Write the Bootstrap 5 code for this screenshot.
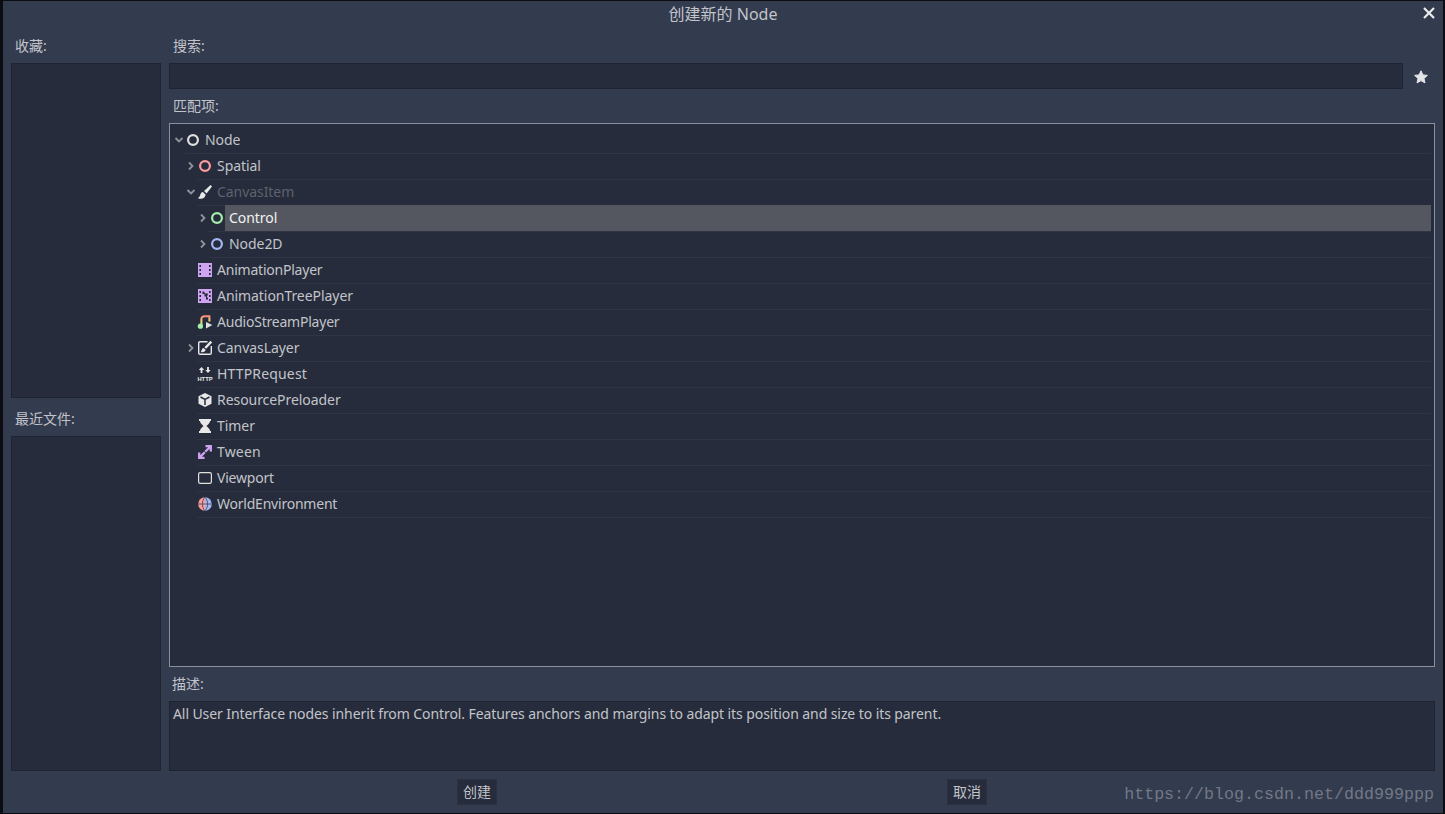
<!DOCTYPE html>
<html lang="zh">
<head>
<meta charset="utf-8">
<title>创建新的 Node</title>
<link href="https://cdn.jsdelivr.net/npm/bootstrap@5.3.0/dist/css/bootstrap.min.css" rel="stylesheet">
<style>
html,body{height:814px;overflow:hidden}
body{background:#0c0d11;font-family:"Noto Sans","Noto Sans CJK SC",sans-serif;font-size:14px;line-height:20px;color:#c2c4ca;padding:1px 2px 1px 3px}
.gd-window{height:812px;background:#333b4f;position:relative}
.gd-title{height:35px;padding-top:2px;font-size:16px;line-height:22px}
.gd-close{position:absolute;top:5px;right:7px;width:14px;height:14px;display:block}
.gd-main{flex:1 1 0;min-height:0;padding:0 8px;gap:8px}
.gd-left{width:150px}
.gd-label{padding:0 4px;height:27px;flex:none}
.gd-label-mid{height:38px;padding-top:11px}
.gd-label-sm{height:34px;padding-top:7px}
.gd-label-desc{height:34px;padding:7px 3px 0}
.gd-panel{background:#262c3b;border:1px solid #1f2430}
.gd-panel-grow{flex:1 1 0;min-height:0}
.gd-search{height:26px}
.gd-star{width:32px;flex:none;padding:2px 0 0 4px}
.gd-fill{min-width:0}
.gd-tree{flex:1 1 0;min-height:0;background:#262c3b;border:1px solid #8a8f9b;padding:4px 3px 0}
.gd-node{height:26px}
.gd-lv1{padding-left:12px}
.gd-lv2{padding-left:24px}
.gd-arrow{width:12px;flex:none;padding-bottom:2px}
.gd-cell{border-bottom:1px solid #2f3545;min-width:0;padding-bottom:1px}
.gd-ico{width:16px;height:16px;flex:none}
.gd-name{padding-left:4px;height:24px;line-height:24px;letter-spacing:-.06px}
.gd-tight{letter-spacing:-.22px}
.gd-wide{letter-spacing:.16px}
.gd-muted{color:#5d626e}
.gd-sel{background:#54575f;color:#f2f2f2;margin-top:-1px;height:26px;line-height:26px}
.gd-desc{height:70px;flex:none;padding:2px 3px;letter-spacing:-.085px}
.gd-foot{height:42px;flex:none;padding:8px 0 0 454px;gap:450px}
.gd-btn{width:40px;height:26px;padding:0;background:#262c3b;border:1px solid #2a3040;border-radius:0;color:#c2c4ca;font-size:14px;line-height:24px}
.gd-btn:hover{background:#262c3b;color:#c2c4ca;border-color:#2a3040}
.gd-mark{position:absolute;right:9px;bottom:8px;font-family:"Liberation Mono",monospace;font-size:16.67px;line-height:20px;color:#727885}
</style>
</head>
<body>
<div class="gd-window d-flex flex-column">
  <div class="gd-title text-center">创建新的 Node</div>
  <svg class="gd-close" viewBox="0 0 14 14"><path d="M2 2 12 12M12 2 2 12" stroke="#ececec" stroke-width="2.2" fill="none"/></svg>
  <div class="gd-main d-flex">
    <div class="gd-left d-flex flex-column">
      <div class="gd-label">收藏:</div>
      <div class="gd-panel gd-panel-grow"></div>
      <div class="gd-label gd-label-mid">最近文件:</div>
      <div class="gd-panel gd-panel-grow"></div>
    </div>
    <div class="flex-grow-1 d-flex flex-column gd-fill">
      <div class="gd-label">搜索:</div>
      <div class="d-flex gd-search">
        <div class="gd-panel flex-grow-1"></div>
        <div class="gd-star d-flex align-items-center justify-content-center">
          <svg width="14" height="14" viewBox="0 0 14 14"><path d="M7 .8 8.9 4.9 13.4 5.4 10 8.4 11 12.9 7 10.6 3 12.9 4 8.4 .6 5.4 5.1 4.9Z" fill="#e4e5e8" stroke="#e4e5e8" stroke-linejoin="round"/></svg>
        </div>
      </div>
      <div class="gd-label gd-label-sm">匹配项:</div>
      <div class="gd-tree">
        <!-- Node -->
        <div class="gd-node d-flex">
          <div class="gd-arrow d-flex align-items-center justify-content-center"><svg width="12" height="12" viewBox="0 0 12 12"><path d="M2.5 4 6 7.5 9.5 4" fill="none" stroke="#8f939b" stroke-width="1.8"/></svg></div>
          <div class="gd-cell flex-grow-1 d-flex align-items-center">
            <svg class="gd-ico" viewBox="0 0 16 16"><circle cx="8" cy="8" r="4.9" fill="none" stroke="#e0e0e0" stroke-width="2.2"/></svg>
            <div class="gd-name flex-grow-1">Node</div>
          </div>
        </div>
        <!-- Spatial -->
        <div class="gd-node d-flex gd-lv1">
          <div class="gd-arrow d-flex align-items-center justify-content-center"><svg width="12" height="12" viewBox="0 0 12 12"><path d="M4 2.5 7.5 6 4 9.5" fill="none" stroke="#8f939b" stroke-width="1.8"/></svg></div>
          <div class="gd-cell flex-grow-1 d-flex align-items-center">
            <svg class="gd-ico" viewBox="0 0 16 16"><circle cx="8" cy="8" r="4.9" fill="none" stroke="#fc9c9c" stroke-width="2.2"/></svg>
            <div class="gd-name flex-grow-1">Spatial</div>
          </div>
        </div>
        <!-- CanvasItem -->
        <div class="gd-node d-flex gd-lv1">
          <div class="gd-arrow d-flex align-items-center justify-content-center"><svg width="12" height="12" viewBox="0 0 12 12"><path d="M2.5 4 6 7.5 9.5 4" fill="none" stroke="#8f939b" stroke-width="1.8"/></svg></div>
          <div class="gd-cell flex-grow-1 d-flex align-items-center">
            <svg class="gd-ico" viewBox="0 0 16 16"><path d="M13.6 1 15 2.4 9.6 9.4 7 7ZM5.9 8C3.6 8.2 3.4 10.8 2.8 12.2L1 14.2C4.4 15.4 8.4 14.6 8.6 10.6Z" fill="#e8e8e8"/></svg>
            <div class="gd-name gd-muted flex-grow-1">CanvasItem</div>
          </div>
        </div>
        <!-- Control -->
        <div class="gd-node d-flex gd-lv2">
          <div class="gd-arrow d-flex align-items-center justify-content-center"><svg width="12" height="12" viewBox="0 0 12 12"><path d="M4 2.5 7.5 6 4 9.5" fill="none" stroke="#8f939b" stroke-width="1.8"/></svg></div>
          <div class="gd-cell flex-grow-1 d-flex align-items-start">
            <svg class="gd-ico mt-1" viewBox="0 0 16 16"><circle cx="8" cy="8" r="4.9" fill="none" stroke="#a5efac" stroke-width="2.2"/></svg>
            <div class="gd-name gd-sel flex-grow-1">Control</div>
          </div>
        </div>
        <!-- Node2D -->
        <div class="gd-node d-flex gd-lv2">
          <div class="gd-arrow d-flex align-items-center justify-content-center"><svg width="12" height="12" viewBox="0 0 12 12"><path d="M4 2.5 7.5 6 4 9.5" fill="none" stroke="#8f939b" stroke-width="1.8"/></svg></div>
          <div class="gd-cell flex-grow-1 d-flex align-items-center">
            <svg class="gd-ico" viewBox="0 0 16 16"><circle cx="8" cy="8" r="4.9" fill="none" stroke="#a5b7f3" stroke-width="2.2"/></svg>
            <div class="gd-name flex-grow-1">Node2D</div>
          </div>
        </div>
        <!-- AnimationPlayer -->
        <div class="gd-node d-flex gd-lv1">
          <div class="gd-arrow"></div>
          <div class="gd-cell flex-grow-1 d-flex align-items-center">
            <svg class="gd-ico" viewBox="0 0 16 16"><path fill-rule="evenodd" d="M1 1H15V15H1ZM2.4 3V5H4V3ZM2.4 7V9H4V7ZM2.4 11V13H4V11ZM12 3V5H13.6V3ZM12 7V9H13.6V7ZM12 11V13H13.6V11Z" fill="#cea4f1"/></svg>
            <div class="gd-name gd-tight flex-grow-1">AnimationPlayer</div>
          </div>
        </div>
        <!-- AnimationTreePlayer -->
        <div class="gd-node d-flex gd-lv1">
          <div class="gd-arrow"></div>
          <div class="gd-cell flex-grow-1 d-flex align-items-center">
            <svg class="gd-ico" viewBox="0 0 16 16"><path fill-rule="evenodd" d="M1 1H15V15H1ZM2.4 3V5H4V3ZM2.4 7V9H4V7ZM2.4 11V13H4V11ZM12 3V5H13.6V3ZM12 7V9H13.6V7ZM12 11V13H13.6V11ZM5.5 3.5V6H7.5V8.5H9V11.5H11V9.5H10V7.5H10.8V5.5H8V4.5H7V3.5Z" fill="#cea4f1"/></svg>
            <div class="gd-name flex-grow-1">AnimationTreePlayer</div>
          </div>
        </div>
        <!-- AudioStreamPlayer -->
        <div class="gd-node d-flex gd-lv1">
          <div class="gd-arrow"></div>
          <div class="gd-cell flex-grow-1 d-flex align-items-center">
            <svg class="gd-ico" viewBox="0 0 16 16"><defs><linearGradient id="gdAudio" x1="0" y1="1" x2="0" y2="0"><stop offset="0" stop-color="#a5efac"/><stop offset=".55" stop-color="#f4d27a"/><stop offset="1" stop-color="#fc8c7c"/></linearGradient></defs><path d="M4.4 12V5C4.4 3.2 5.6 2.2 7.4 2.2H12.4V7.4" fill="none" stroke="url(#gdAudio)" stroke-width="2"/><circle cx="3.4" cy="12.2" r="2.6" fill="#a5efac"/><path d="M9 8 15.4 11 9 14.4Z" fill="#e0e0e0"/></svg>
            <div class="gd-name gd-tight flex-grow-1">AudioStreamPlayer</div>
          </div>
        </div>
        <!-- CanvasLayer -->
        <div class="gd-node d-flex gd-lv1">
          <div class="gd-arrow d-flex align-items-center justify-content-center"><svg width="12" height="12" viewBox="0 0 12 12"><path d="M4 2.5 7.5 6 4 9.5" fill="none" stroke="#8f939b" stroke-width="1.8"/></svg></div>
          <div class="gd-cell flex-grow-1 d-flex align-items-center">
            <svg class="gd-ico" viewBox="0 0 16 16"><path d="M10.5 1.7H3Q1.7 1.7 1.7 3V13Q1.7 14.3 3 14.3H13Q14.3 14.3 14.3 13V6" fill="none" stroke="#e8e8e8" stroke-width="1.4"/><path d="M13.4 .8 15.2 2.4 9.2 8.8 7.4 7.2ZM6.5 8C4.6 8.3 5 10.6 3.8 12 6 12.8 8.6 11.8 8.6 9.8Z" fill="#e8e8e8"/></svg>
            <div class="gd-name flex-grow-1">CanvasLayer</div>
          </div>
        </div>
        <!-- HTTPRequest -->
        <div class="gd-node d-flex gd-lv1">
          <div class="gd-arrow"></div>
          <div class="gd-cell flex-grow-1 d-flex align-items-center">
            <svg class="gd-ico" viewBox="0 0 16 16"><path d="M4.5 1 7.2 4H5.4V7H3.6V4H1.8ZM11 7 8.3 4H10.1V1H11.9V4H13.7Z" fill="#e8e8e8"/><text x="8" y="14.6" text-anchor="middle" font-family="Liberation Sans" font-size="5.8" font-weight="700" fill="#e8e8e8">HTTP</text></svg>
            <div class="gd-name gd-wide flex-grow-1">HTTPRequest</div>
          </div>
        </div>
        <!-- ResourcePreloader -->
        <div class="gd-node d-flex gd-lv1">
          <div class="gd-arrow"></div>
          <div class="gd-cell flex-grow-1 d-flex align-items-center">
            <svg class="gd-ico" viewBox="0 0 16 16"><path d="M8 1 14.5 4.3V11.7L8 15 1.5 11.7V4.3Z" fill="#e8e8e8"/><path d="M8 7.5V13M3.5 5 8 7.5 12.5 5" fill="none" stroke="#262c3b" stroke-width="1.5"/></svg>
            <div class="gd-name flex-grow-1">ResourcePreloader</div>
          </div>
        </div>
        <!-- Timer -->
        <div class="gd-node d-flex gd-lv1">
          <div class="gd-arrow"></div>
          <div class="gd-cell flex-grow-1 d-flex align-items-center">
            <svg class="gd-ico" viewBox="0 0 16 16"><path d="M2 1H14V3H13C13 5.5 10.2 7 9.4 8 10.2 9 13 10.5 13 13H14V15H2V13H3C3 10.5 5.8 9 6.6 8 5.8 7 3 5.5 3 3H2Z" fill="#e8e8e8"/></svg>
            <div class="gd-name flex-grow-1">Timer</div>
          </div>
        </div>
        <!-- Tween -->
        <div class="gd-node d-flex gd-lv1">
          <div class="gd-arrow"></div>
          <div class="gd-cell flex-grow-1 d-flex align-items-center">
            <svg class="gd-ico" viewBox="0 0 16 16"><path d="M8.5 2.2H13.8V7.5M13.2 2.8 8.2 7.8M7.5 13.8H2.2V8.5M2.8 13.2 7.8 8.2" fill="none" stroke="#cea4f1" stroke-width="2.3"/></svg>
            <div class="gd-name gd-wide flex-grow-1">Tween</div>
          </div>
        </div>
        <!-- Viewport -->
        <div class="gd-node d-flex gd-lv1">
          <div class="gd-arrow"></div>
          <div class="gd-cell flex-grow-1 d-flex align-items-center">
            <svg class="gd-ico" viewBox="0 0 16 16"><rect x="1.6" y="2.6" width="12.8" height="10.8" rx="1.6" fill="none" stroke="#e0e0e0" stroke-width="1.2"/></svg>
            <div class="gd-name gd-tight flex-grow-1">Viewport</div>
          </div>
        </div>
        <!-- WorldEnvironment -->
        <div class="gd-node d-flex gd-lv1">
          <div class="gd-arrow"></div>
          <div class="gd-cell flex-grow-1 d-flex align-items-center">
            <svg class="gd-ico" viewBox="0 0 16 16"><path d="M8 1.2A6.8 6.8 0 0 0 8 14.8Z" fill="#fc9c9c"/><path d="M8 1.2A6.8 6.8 0 0 1 8 14.8Z" fill="#a5b7f3"/><path d="M1.2 8H14.8M8 1.2C4.5 5 4.5 11 8 14.8 11.5 11 11.5 5 8 1.2Z" fill="none" stroke="#4a4f60" stroke-width=".9"/></svg>
            <div class="gd-name gd-tight flex-grow-1">WorldEnvironment</div>
          </div>
        </div>
      </div>
      <div class="gd-label-desc">描述:</div>
      <div class="gd-panel gd-desc">All User Interface nodes inherit from Control. Features anchors and margins to adapt its position and size to its parent.</div>
    </div>
  </div>
  <div class="gd-foot d-flex">
    <button type="button" class="btn gd-btn">创建</button>
    <button type="button" class="btn gd-btn">取消</button>
  </div>
  <div class="gd-mark">https://blog.csdn.net/ddd999ppp</div>
</div>
<script src="https://cdn.jsdelivr.net/npm/bootstrap@5.3.0/dist/js/bootstrap.bundle.min.js"></script>
</body>
</html>
